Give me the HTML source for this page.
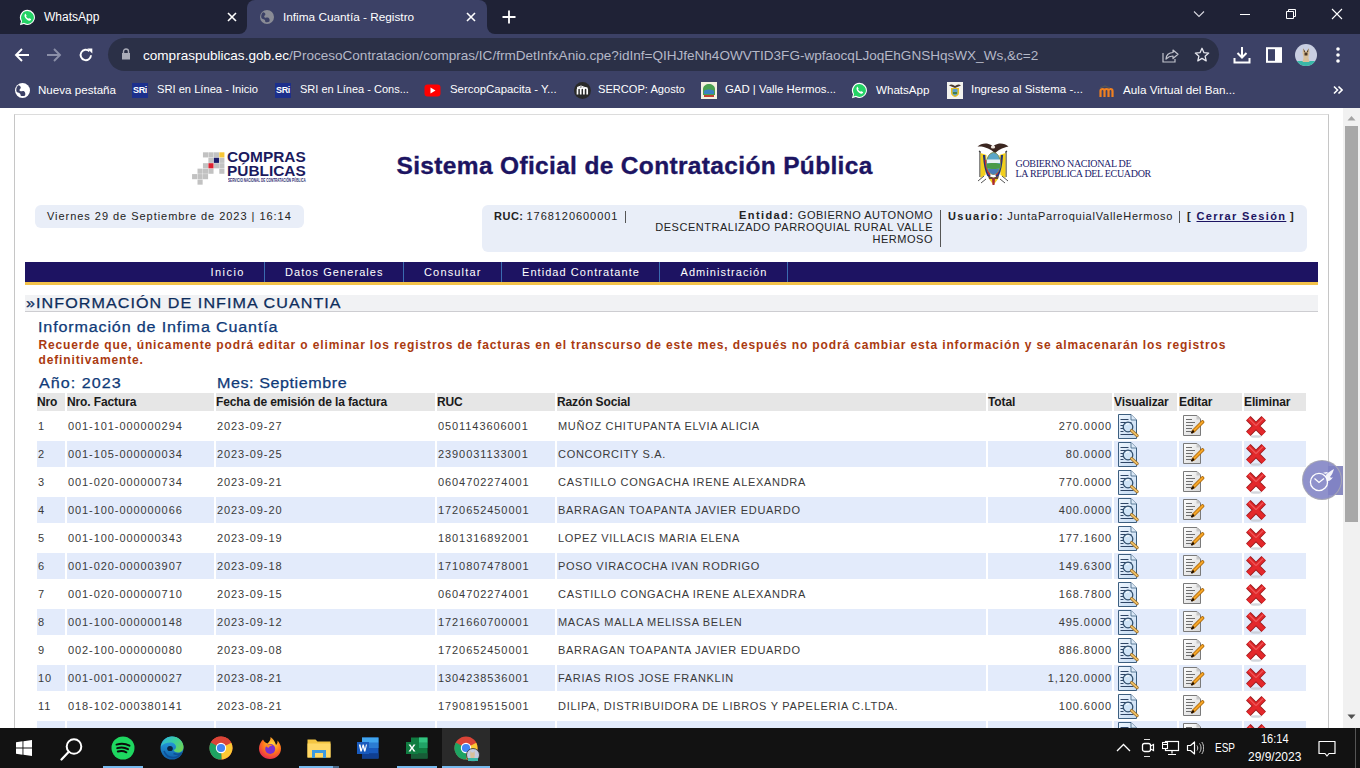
<!DOCTYPE html>
<html><head><meta charset="utf-8">
<style>
*{margin:0;padding:0;box-sizing:border-box}
html,body{width:1360px;height:768px;overflow:hidden;background:#fff;font-family:"Liberation Sans",sans-serif}
.a{position:absolute;white-space:nowrap}
#tabs{position:absolute;left:0;top:0;width:1360px;height:34px;background:#1f2236}
#tool{position:absolute;left:0;top:34px;width:1360px;height:38px;background:#3c4166}
#bm{position:absolute;left:0;top:72px;width:1360px;height:36px;background:#3c4166}
#page{position:absolute;left:0;top:108px;width:1360px;height:620px;background:#fff;overflow:hidden}
#pin{position:absolute;left:0;top:-108px;width:1360px;height:900px}
#task{position:absolute;left:0;top:728px;width:1360px;height:40px;background:#121212}
.ct{color:#fff;font-size:12.5px}
.t11{font-size:11px;color:#222;line-height:14px}
.nv{top:265px;font-size:11px;color:#fff;line-height:14px}
.th{font-size:12px;font-weight:bold;color:#1a1a1a;letter-spacing:-0.12px;line-height:14px}
.td{font-size:11px;color:#3a3a3a;line-height:14px}
.dg{letter-spacing:0.92px}
.up{letter-spacing:0.7px}
</style></head><body>
<div id="tabs">
  <div class="a" style="left:247px;top:0;width:240px;height:34px;background:#3c4166;border-radius:8px 8px 0 0"></div>
  <div class="a" style="left:239px;top:26px;width:8px;height:8px;background:#3c4166"></div>
  <div class="a" style="left:239px;top:26px;width:8px;height:8px;background:#1f2236;border-radius:0 0 8px 0"></div>
  <div class="a" style="left:487px;top:26px;width:8px;height:8px;background:#3c4166"></div>
  <div class="a" style="left:487px;top:26px;width:8px;height:8px;background:#1f2236;border-radius:0 0 0 8px"></div>
  <!-- whatsapp tab -->
  <svg class="a" style="left:19px;top:9px" width="17" height="17" viewBox="0 0 16 16"><path d="M8 0.8a7.1 7.1 0 0 0-6.1 10.8L0.9 15.2l3.7-1A7.1 7.1 0 1 0 8 0.8z" fill="#fff"/><path d="M8 2a6 6 0 0 0-5.1 9.2l-0.6 2.4 2.4-0.6A6 6 0 1 0 8 2z" fill="#25d366"/><path d="M5.6 4.6c.2-.2.5-.2.7 0l.8 1.4c.1.2 0 .5-.1.6l-.4.4c.4.9 1.2 1.7 2.2 2.2l.4-.4c.2-.2.4-.2.6-.1l1.4.8c.2.1.3.4.1.7-.4.8-1.2 1.1-2 .8-1.9-.7-3.3-2.1-4-4-.3-.8 0-1.6.3-2.4z" fill="#fff"/></svg>
  <div class="a ct" style="left:44px;top:10px;font-size:12px">WhatsApp</div>
  <svg class="a" style="left:227px;top:12px" width="10" height="10" viewBox="0 0 10 10"><path d="M1 1L9 9M9 1L1 9" stroke="#fff" stroke-width="1.6"/></svg>
  <!-- active tab content -->
  <svg class="a" style="left:260px;top:10px" width="14" height="14" viewBox="0 0 14 14"><circle cx="7" cy="7" r="7" fill="#8a8c96"/><path d="M3 2.2c1.5.3 2.6 1.2 2.4 2.3-.2 1-1.3 1.2-1.2 2.2.1.9 1.4 1.1 2.6.9 1.5-.2 2.3.5 2.6 1.4.3.9.4 1.8-.2 2.8-1.2.5-2.6.6-3.8.2-.3-1-.2-2-1.1-2.4-1-.5-2.2-.6-2.9-1.6-.5-1.9-.1-4.1 1.6-5.8z" fill="#3c4166"/></svg>
  <div class="a ct" style="left:283px;top:10px;font-size:11.8px">Infima Cuantía - Registro</div>
  <svg class="a" style="left:466px;top:12px" width="10" height="10" viewBox="0 0 10 10"><path d="M1 1L9 9M9 1L1 9" stroke="#fff" stroke-width="1.6"/></svg>
  <svg class="a" style="left:502px;top:10px" width="14" height="14" viewBox="0 0 14 14"><path d="M7 0.5V13.5M0.5 7H13.5" stroke="#fff" stroke-width="1.8"/></svg>
  <!-- window controls -->
  <svg class="a" style="left:1193px;top:10px" width="12" height="8" viewBox="0 0 12 8"><path d="M1 1.5L6 6.5L11 1.5" stroke="#d8d8e0" stroke-width="1.1" fill="none"/></svg>
  <div class="a" style="left:1240px;top:14px;width:10px;height:1px;background:#fff"></div>
  <svg class="a" style="left:1285px;top:8px" width="12" height="12" viewBox="0 0 12 12"><path d="M1.5 3.5h7v7h-7z M3.5 3.5V1.5h7v7h-2" stroke="#fff" stroke-width="1" fill="none"/></svg>
  <svg class="a" style="left:1331px;top:8px" width="12" height="12" viewBox="0 0 12 12"><path d="M1 1L11 11M11 1L1 11" stroke="#fff" stroke-width="1.1"/></svg>
</div>
<div id="tool">
  <!-- back fwd reload -->
  <svg class="a" style="left:14px;top:13px" width="16" height="16" viewBox="0 0 16 16"><path d="M15 8H2.5M8 2L2 8l6 6" stroke="#fff" stroke-width="1.9" fill="none"/></svg>
  <svg class="a" style="left:46px;top:13px" width="16" height="16" viewBox="0 0 16 16"><path d="M1 8h12.5M8 2l6 6-6 6" stroke="#8b8fa8" stroke-width="1.9" fill="none"/></svg>
  <svg class="a" style="left:78px;top:13px" width="16" height="16" viewBox="0 0 16 16"><path d="M13 8.2A5.2 5.2 0 1 1 11.4 4.2" stroke="#fff" stroke-width="1.9" fill="none"/><path d="M9.3 1.5h5v5z" fill="#fff"/></svg>
  <div class="a" style="left:108px;top:4px;width:1111px;height:33px;background:#2b3047;border-radius:17px"></div>
  <svg class="a" style="left:121px;top:14px" width="10" height="12" viewBox="0 0 10 12"><path d="M2.5 5V3.5a2.5 2.5 0 0 1 5 0V5" stroke="#a9abb7" stroke-width="1.4" fill="none"/><rect x="1" y="5" width="8" height="6.5" fill="#a9abb7"/></svg>
  <div class="a" style="left:143px;top:14px;font-size:13.55px;color:#b5b8c8">
    <span style="color:#fff">compraspublicas.gob.ec</span>/ProcesoContratacion/compras/IC/frmDetInfxAnio.cpe?idInf=QIHJfeNh4OWVTID3FG-wpfaocqLJoqEhGNSHqsWX_Ws,&amp;c=2</div>
  <!-- share & star -->
  <svg class="a" style="left:1162px;top:13px" width="17" height="16" viewBox="0 0 17 16"><path d="M1 6v9h12v-3" stroke="#c0c2cc" stroke-width="1.2" fill="none"/><path d="M4 12c0-4 3-6.5 7-6.5V3l5 4.3-5 4.2V9c-3 0-5 1-7 3z" stroke="#c0c2cc" stroke-width="1.2" fill="none" stroke-linejoin="round"/></svg>
  <svg class="a" style="left:1194px;top:13px" width="16" height="16" viewBox="0 0 16 16"><path d="M8 1.3l2 4.4 4.7.4-3.6 3.1 1.1 4.7L8 11.4l-4.2 2.5 1.1-4.7L1.3 6.1 6 5.7z" stroke="#e6e7ee" stroke-width="1.3" fill="none" stroke-linejoin="round"/></svg>
  <!-- download, sidebar, avatar, menu -->
  <svg class="a" style="left:1233px;top:12px" width="18" height="18" viewBox="0 0 18 18"><path d="M9 1v10M4.5 7l4.5 4.5L13.5 7" stroke="#fff" stroke-width="2" fill="none"/><path d="M1.5 12v4.5h15V12" stroke="#fff" stroke-width="2" fill="none"/></svg>
  <svg class="a" style="left:1266px;top:13px" width="16" height="16" viewBox="0 0 16 16"><rect x="1" y="1.2" width="14" height="13.6" fill="none" stroke="#fff" stroke-width="2"/><rect x="9" y="1" width="6" height="14" fill="#fff"/></svg>
  <svg class="a" style="left:1295px;top:10px" width="22" height="22" viewBox="0 0 22 22"><defs><clipPath id="av"><circle cx="11" cy="11" r="11"/></clipPath></defs><g clip-path="url(#av)"><rect width="22" height="22" fill="#c9cfe2"/><rect y="17" width="22" height="5" fill="#3ab8a8"/><path d="M8 4l2 3h2l2-3 .5 5c-.5 2-1 3-1 5l1 4h-7l1-4c0-2-.5-3-1-5z" fill="#d8c09a"/><path d="M8.5 4.5l1.5 3-1 1zM13.5 4.5l-1.5 3 1 1z" fill="#3a2a20"/><rect x="9.5" y="8.5" width="3" height="3" fill="#4a3626"/></g></svg>
  <svg class="a" style="left:1335px;top:12px" width="6" height="18" viewBox="0 0 6 18"><circle cx="3" cy="3" r="1.8" fill="#fff"/><circle cx="3" cy="9" r="1.8" fill="#fff"/><circle cx="3" cy="15" r="1.8" fill="#fff"/></svg>
</div>
<div id="bm">
  <svg class="a" style="left:15px;top:11px" width="15" height="15" viewBox="0 0 14 14"><circle cx="7" cy="7" r="7" fill="#fff"/><path d="M3 2.2c1.5.3 2.6 1.2 2.4 2.3-.2 1-1.3 1.2-1.2 2.2.1.9 1.4 1.1 2.6.9 1.5-.2 2.3.5 2.6 1.4.3.9.4 1.8-.2 2.8-1.2.5-2.6.6-3.8.2-.3-1-.2-2-1.1-2.4-1-.5-2.2-.6-2.9-1.6-.5-1.9-.1-4.1 1.6-5.8z" fill="#3c4166"/></svg>
  <div class="a ct" style="left:38px;top:11px;font-size:11.6px">Nueva pestaña</div>
  <div class="a" style="left:132px;top:11px;width:16px;height:15px;background:#1c2f8c;color:#fff;font:bold 9px 'Liberation Sans';line-height:15px;text-align:center;letter-spacing:-0.3px">SRi</div>
  <div class="a ct" style="left:157px;top:11px;font-size:11.15px">SRI en Línea - Inicio</div>
  <div class="a" style="left:275px;top:11px;width:16px;height:15px;background:#1c2f8c;color:#fff;font:bold 9px 'Liberation Sans';line-height:15px;text-align:center;letter-spacing:-0.3px">SRi</div>
  <div class="a ct" style="left:300px;top:11px;font-size:11.0px">SRI en Línea - Cons...</div>
  <svg class="a" style="left:424px;top:12px" width="17" height="13" viewBox="0 0 17 13"><rect x="0.5" y="0.5" width="16" height="12" rx="3" fill="#f00"/><path d="M6.5 3.5v6l5-3z" fill="#fff"/></svg>
  <div class="a ct" style="left:450px;top:11px;font-size:11.4px">SercopCapacita - Y...</div>
  <svg class="a" style="left:574px;top:10px" width="17" height="17" viewBox="0 0 17 17"><circle cx="8.5" cy="8.5" r="8.5" fill="#2a2a2a"/><path d="M3.5 12.5V7.5c0-1 .8-1.6 1.6-1.6s1.6.6 1.6 1.6v5M6.7 7.5c0-1 .8-1.6 1.6-1.6s1.6.6 1.6 1.6v5M10 7.5c0-1 .8-1.6 1.6-1.6s1.6.6 1.6 1.6v5" stroke="#fff" stroke-width="1.7" fill="none"/><path d="M3 5.5l4-1.5 4 1.5" stroke="#fff" stroke-width="1" fill="none"/></svg>
  <div class="a ct" style="left:598px;top:11px;font-size:11.1px">SERCOP: Agosto</div>
  <svg class="a" style="left:701px;top:10px" width="16" height="17" viewBox="0 0 16 17"><rect width="16" height="17" fill="#f4f0e0"/><path d="M2 13V7c0-3 3-5 6-5s6 2 6 5v6z" fill="#4aa050"/><path d="M3 9c2-2 8-2 10 0v3H3z" fill="#3a80c0"/><rect x="3" y="13" width="10" height="2" fill="#c04030"/></svg>
  <div class="a ct" style="left:725px;top:11px;font-size:11.4px">GAD | Valle Hermos...</div>
  <svg class="a" style="left:851px;top:10px" width="17" height="17" viewBox="0 0 16 16"><path d="M8 0.8a7.1 7.1 0 0 0-6.1 10.8L0.9 15.2l3.7-1A7.1 7.1 0 1 0 8 0.8z" fill="#fff"/><path d="M8 2a6 6 0 0 0-5.1 9.2l-0.6 2.4 2.4-0.6A6 6 0 1 0 8 2z" fill="#25d366"/><path d="M5.6 4.6c.2-.2.5-.2.7 0l.8 1.4c.1.2 0 .5-.1.6l-.4.4c.4.9 1.2 1.7 2.2 2.2l.4-.4c.2-.2.4-.2.6-.1l1.4.8c.2.1.3.4.1.7-.4.8-1.2 1.1-2 .8-1.9-.7-3.3-2.1-4-4-.3-.8 0-1.6.3-2.4z" fill="#fff"/></svg>
  <div class="a ct" style="left:876px;top:11px;font-size:11.6px">WhatsApp</div>
  <svg class="a" style="left:947px;top:10px" width="16" height="17" viewBox="0 0 16 17"><rect width="16" height="17" fill="#f2f2ee"/><path d="M2 3.5c2-1.5 4-1 6 .5 2-1.5 4-2 6-.5L8 6z" fill="#4a3a30"/><path d="M4 6h8v5c0 2-2 3.5-4 4-2-.5-4-2-4-4z" fill="#e8c020"/><path d="M5.5 7h5v4c0 1.3-1.2 2.3-2.5 2.8-1.3-.5-2.5-1.5-2.5-2.8z" fill="#5aa0d0"/><rect x="6" y="10" width="4" height="2" fill="#4a8040"/></svg>
  <div class="a ct" style="left:971px;top:11px;font-size:11.5px">Ingreso al Sistema -...</div>
  <svg class="a" style="left:1099px;top:11px" width="17" height="15" viewBox="0 0 17 15"><path d="M1.5 14V8c0-1.3 1-2 2-2s2 .7 2 2v6M5.5 8c0-1.3 1-2 2-2s2 .7 2 2v6M9.5 8c0-1.3 1-2 2-2s2 .7 2 2v6" stroke="#f08020" stroke-width="2.2" fill="none"/><path d="M1 5l5-2 5 2" stroke="#555" stroke-width="1.2" fill="none"/></svg>
  <div class="a ct" style="left:1123px;top:11px;font-size:11.7px">Aula Virtual del Ban...</div>
  <svg class="a" style="left:1333px;top:84px;display:none" width="10" height="10"></svg>
  <svg class="a" style="left:1333px;top:13px" width="10" height="10" viewBox="0 0 10 10"><path d="M1 1.5l3.5 3.5L1 8.5M5.5 1.5L9 5l-3.5 3.5" stroke="#fff" stroke-width="1.6" fill="none"/></svg>
</div>
<div id="page"><div id="pin"><div class="a" style="left:14px;top:114px;width:1315px;height:700px;border:1px solid #c6c6c6;border-top-color:#dcdcdc;background:#fff"></div>
<!-- compras publicas logo -->
<svg class="a" style="left:192px;top:152px" width="33" height="38" viewBox="0 0 32 37">
 <g fill="#c2c2c2">
  <rect x="10.6" y="0.3" width="5" height="5"/><rect x="15.9" y="0.3" width="5" height="5"/><rect x="21.2" y="0.3" width="5" height="5"/>
  <rect x="15.9" y="5.6" width="5" height="5"/><rect x="26.5" y="5.6" width="5" height="5"/>
  <rect x="10.6" y="10.9" width="5" height="5"/><rect x="21.2" y="10.9" width="5" height="5"/><rect x="26.5" y="10.9" width="5" height="5"/>
  <rect x="5.3" y="16.2" width="5" height="5"/><rect x="10.6" y="16.2" width="5" height="5"/><rect x="15.9" y="16.2" width="5" height="5"/><rect x="26.5" y="16.2" width="5" height="5"/>
  <rect x="0" y="21.5" width="5" height="5"/><rect x="5.3" y="21.5" width="5" height="5"/><rect x="10.6" y="21.5" width="5" height="5"/>
  <rect x="5.3" y="26.8" width="5" height="5"/>
 </g>
 <rect x="26.5" y="0.3" width="5" height="5" fill="#f7c637"/>
 <rect x="21.2" y="5.6" width="5" height="5" fill="#1d1d6b"/>
 <rect x="15.9" y="10.9" width="5" height="5" fill="#dd2130"/>
</svg>
<div class="a" style="left:226.5px;top:150px;font:bold 14px 'Liberation Sans';color:#1b1a5e;line-height:14px;transform:scaleX(1.1);transform-origin:0 0">COMPRAS</div>
<div class="a" style="left:226.5px;top:164px;font:bold 14px 'Liberation Sans';color:#1b1a5e;line-height:14px;transform:scaleX(1.1);transform-origin:0 0">PÚBLICAS</div>
<div class="a" style="left:228px;top:177.5px;font:bold 4.6px 'Liberation Sans';color:#2a2a70;line-height:5px;transform:scaleX(0.68);transform-origin:0 0">SERVICIO NACIONAL DE CONTRATACIÓN PÚBLICA</div>
<!-- title -->
<div class="a" style="left:396.5px;top:152px;font:bold 24.5px 'Liberation Sans';color:#1c1462;-webkit-text-stroke:0.35px #1c1462;letter-spacing:0.34px;line-height:28px">Sistema Oficial de Contratación Pública</div>
<!-- ecuador logo -->
<svg class="a" style="left:970px;top:138px" width="48" height="52" viewBox="0 0 48 52">
 <path d="M7.5 8.5c3-2.5 7-3.5 11-2.5 2 .5 3.5 1.5 4.5 2.5 1-1 2.5-2 4.5-2.5 4-1 8 0 11 2.5-3 .5-6 1.5-8.5 3-2 1.2-3.5 2.2-5 3.8-1.5-1.6-3-2.6-5-3.8-2.5-1.5-5.5-2.5-8.5-3z" fill="#3b2620"/>
 <ellipse cx="23" cy="9" rx="2.2" ry="1.6" fill="#f0e8e0"/>
 <path d="M9 13l1.5 1M37 13l-1.5 1" stroke="#333" stroke-width="1.2"/>
 <path d="M10 14v25M36 14v25" stroke="#3a3a3a" stroke-width="1.2"/>
 <path d="M10.5 15c2 1 4 1 6 2l-1 20c-2 1-3.5 2-5 3z" fill="#f2cf1c"/>
 <path d="M35.5 15c-2 1-4 1-6 2l1 20c2 1 3.5 2 5 3z" fill="#f2cf1c"/>
 <path d="M14 17c.5 7 1 14 4 20l2 1.5" stroke="#22347a" stroke-width="2.2" fill="none"/>
 <path d="M32 17c-.5 7-1 14-4 20l-2 1.5" stroke="#22347a" stroke-width="2.2" fill="none"/>
 <path d="M15.5 22c.5 6 1.5 11 4.5 15" stroke="#c42a3a" stroke-width="1.8" fill="none"/>
 <path d="M30.5 22c-.5 6-1.5 11-4.5 15" stroke="#c42a3a" stroke-width="1.8" fill="none"/>
 <ellipse cx="23.5" cy="25.5" rx="7" ry="11" fill="#5aa6c8" stroke="#7a8a50" stroke-width="1"/>
 <path d="M17 21.5h13v3.5H17z" fill="#e8f0f4"/>
 <path d="M16.8 26c3-1.5 10-1.5 13.5 0v4c-3 1.5-10 1.5-13.5 0z" fill="#4a9a48"/>
 <path d="M18 31h11c-1 3-3 5-5.5 5.5-2.5-.5-4.5-2.5-5.5-5.5z" fill="#4a7ab8"/>
 <path d="M18 38l5.5 1.5 5.5-1.5-1 3h-9z" fill="#6a4a30"/>
 <path d="M19 41l4.5 6 4.5-6z" fill="#f2cf1c"/>
 <path d="M22 40.5h3l-.5 6.5h-2z" fill="#a82838"/>
 <path d="M8 43l6-5M38 43l-6-5M11 45l5-4M35 45l-5-4" stroke="#555" stroke-width="1"/>
</svg>
<div class="a" style="left:1015.5px;top:158px;font:10px 'Liberation Serif';color:#22206a;letter-spacing:-0.3px;line-height:11px">GOBIERNO NACIONAL DE</div>
<div class="a" style="left:1015.5px;top:167.5px;font:10px 'Liberation Serif';color:#22206a;letter-spacing:-0.3px;line-height:11px">LA REPUBLICA DEL ECUADOR</div>
<!-- date box -->
<div class="a" style="left:35px;top:205px;width:269px;height:23px;background:#e9eef8;border-radius:6px"></div>
<div class="a t11" style="left:47px;top:209px;letter-spacing:0.96px">Viernes 29 de Septiembre de 2023 | 16:14</div>
<!-- info box -->
<div class="a" style="left:482px;top:205px;width:825px;height:47px;background:#e9eef8;border-radius:6px"></div>
<div class="a t11" style="left:494px;top:208.5px"><b style="letter-spacing:0.5px">RUC:</b> <span style="letter-spacing:0.94px">1768120600001</span></div>
<div class="a" style="left:625px;top:211px;width:1px;height:12px;background:#555"></div>
<div class="a t11" style="right:427px;top:208.5px;text-align:right;line-height:12px;letter-spacing:0.52px"><b style="letter-spacing:1.4px">Entidad:</b> GOBIERNO AUTONOMO<br>DESCENTRALIZADO PARROQUIAL RURAL VALLE<br>HERMOSO</div>
<div class="a" style="left:940px;top:210px;width:1px;height:37px;background:#555"></div>
<div class="a t11" style="left:948px;top:208.5px"><b style="letter-spacing:1.43px">Usuario:</b> <span style="letter-spacing:0.77px">JuntaParroquialValleHermoso</span></div>
<div class="a" style="left:1179px;top:211px;width:1px;height:12px;background:#555"></div>
<div class="a t11" style="left:1187px;top:208.5px;font-weight:bold">[</div>
<div class="a t11" style="left:1196.5px;top:208.5px;font-weight:bold;color:#1c1462;text-decoration:underline;letter-spacing:1.36px">Cerrar Sesión</div>
<div class="a t11" style="left:1290px;top:208.5px;font-weight:bold">]</div>
<!-- nav -->
<div class="a" style="left:25px;top:262px;width:1293px;height:20px;background:#1d1362"></div>
<div class="a" style="left:25px;top:282px;width:1293px;height:3px;background:#f3c24a"></div>
<div class="a" style="left:264px;top:262px;width:1px;height:20px;background:#3a6bb0"></div>
<div class="a" style="left:403px;top:262px;width:1px;height:20px;background:#3a6bb0"></div>
<div class="a" style="left:501px;top:262px;width:1px;height:20px;background:#3a6bb0"></div>
<div class="a" style="left:659px;top:262px;width:1px;height:20px;background:#3a6bb0"></div>
<div class="a" style="left:787px;top:262px;width:1px;height:20px;background:#3a6bb0"></div>
<div class="a nv" style="left:210.5px;letter-spacing:1.45px">Inicio</div>
<div class="a nv" style="left:285px;letter-spacing:1.07px">Datos Generales</div>
<div class="a nv" style="left:424px;letter-spacing:1.16px">Consultar</div>
<div class="a nv" style="left:522px;letter-spacing:1.06px">Entidad Contratante</div>
<div class="a nv" style="left:680.5px;letter-spacing:1.05px">Administración</div>
<!-- heading -->
<div class="a" style="left:25px;top:295px;width:1293px;height:17px;background:#f1f2f4;border-bottom:1px solid #cdcdd1"></div>
<div class="a" style="left:26px;top:295px;font:14px 'Liberation Sans';color:#0d2d5c;-webkit-text-stroke:0.25px #0d2d5c;letter-spacing:0.93px;line-height:16px;transform:scaleX(1.15);transform-origin:0 0">»INFORMACIÓN DE INFIMA CUANTIA</div>
<div class="a" style="left:38px;top:318.5px;font:14px 'Liberation Sans';color:#0f3a78;-webkit-text-stroke:0.25px #0f3a78;letter-spacing:0.74px;line-height:16px;transform:scaleX(1.15);transform-origin:0 0">Información de Infima Cuantía</div>
<div class="a" style="left:38.5px;top:338px;font:bold 12px 'Liberation Sans';color:#aa3a10;letter-spacing:0.87px;line-height:15px;white-space:normal;width:1240px">Recuerde que, únicamente podrá editar o eliminar los registros de facturas en el transcurso de este mes, después no podrá cambiar esta información y se almacenarán los registros definitivamente.</div>
<div class="a" style="left:38.5px;top:374.5px;font:14px 'Liberation Sans';color:#0f3a78;-webkit-text-stroke:0.25px #0f3a78;letter-spacing:0.9px;line-height:16px;transform:scaleX(1.15);transform-origin:0 0">Año: 2023</div>
<div class="a" style="left:217px;top:374.5px;font:14px 'Liberation Sans';color:#0f3a78;-webkit-text-stroke:0.25px #0f3a78;letter-spacing:0.49px;line-height:16px;transform:scaleX(1.15);transform-origin:0 0">Mes: Septiembre</div>
<svg width="0" height="0" style="position:absolute"><defs><linearGradient id="vg" x1="0" y1="0" x2="1" y2="1"><stop offset="0" stop-color="#eef6fe"/><stop offset="1" stop-color="#c4daf2"/></linearGradient><linearGradient id="eg" x1="0" y1="0" x2="1" y2="1"><stop offset="0" stop-color="#ffffff"/><stop offset="1" stop-color="#d6d6d6"/></linearGradient></defs></svg>
<div class="a" style="left:37px;top:393px;width:28px;height:18px;background:#e6e6e6"></div>
<div class="a th" style="left:37px;top:395px">Nro</div>
<div class="a" style="left:67px;top:393px;width:147px;height:18px;background:#e6e6e6"></div>
<div class="a th" style="left:67px;top:395px">Nro. Factura</div>
<div class="a" style="left:216px;top:393px;width:219px;height:18px;background:#e6e6e6"></div>
<div class="a th" style="left:216px;top:395px">Fecha de emisión de la factura</div>
<div class="a" style="left:437px;top:393px;width:118px;height:18px;background:#e6e6e6"></div>
<div class="a th" style="left:437px;top:395px">RUC</div>
<div class="a" style="left:557px;top:393px;width:429px;height:18px;background:#e6e6e6"></div>
<div class="a th" style="left:557px;top:395px">Razón Social</div>
<div class="a" style="left:988px;top:393px;width:124px;height:18px;background:#e6e6e6"></div>
<div class="a th" style="left:988px;top:395px">Total</div>
<div class="a" style="left:1114px;top:393px;width:63px;height:18px;background:#e6e6e6"></div>
<div class="a th" style="left:1114px;top:395px">Visualizar</div>
<div class="a" style="left:1179px;top:393px;width:63px;height:18px;background:#e6e6e6"></div>
<div class="a th" style="left:1179px;top:395px">Editar</div>
<div class="a" style="left:1244px;top:393px;width:62px;height:18px;background:#e6e6e6"></div>
<div class="a th" style="left:1244px;top:395px">Eliminar</div>
<div class="a td dg" style="left:38px;top:419px">1</div>
<div class="a td dg" style="left:68px;top:419px">001-101-000000294</div>
<div class="a td dg" style="left:217px;top:419px">2023-09-27</div>
<div class="a td dg" style="left:438px;top:419px">0501143606001</div>
<div class="a td up" style="left:558px;top:419px">MUÑOZ CHITUPANTA ELVIA ALICIA</div>
<div class="a td dg" style="right:248px;top:419px;text-align:right">270.0000</div>
<svg class="a" style="left:1118px;top:414px" width="22" height="26" viewBox="0 0 22 26"><path d="M0.5 0.5h12.5l5.5 5.5v18.5h-18z" fill="url(#vg)" stroke="#3d5f80" stroke-width="1"/><path d="M13 0.5v5.5h5.5" fill="#dbe9f7" stroke="#3d5f80" stroke-width="0.8"/><path d="M2.5 5.5h8M2.5 8.5h11M2.5 11.5h3M2.5 14.5h3M2.5 17.5h3M2.5 20.5h13" stroke="#2f4666" stroke-width="1"/><circle cx="10" cy="13" r="4.8" fill="#cfe4f7" stroke="#33506e" stroke-width="1.3"/><path d="M8 11a2.5 2.5 0 0 1 3-1" stroke="#fff" stroke-width="1" fill="none"/><path d="M13.6 16.6l5.5 5" stroke="#9a6a20" stroke-width="3.2" stroke-linecap="round"/><path d="M13.6 16.6l5.5 5" stroke="#f2c46a" stroke-width="1.6" stroke-linecap="round"/></svg>
<svg class="a" style="left:1183px;top:415px" width="22" height="22" viewBox="0 0 22 22"><path d="M0.5 0.5h13.5l3.5 3.5v16.5h-17z" fill="url(#eg)" stroke="#7a7a7a" stroke-width="1"/><path d="M13.5 0.5l4 4h-4z" fill="#c8c8c8"/><path d="M3 4.5h6M3 7.5h9M3 10.5h7M3 13.5h6M3 16.5h5" stroke="#6e6e6e" stroke-width="1"/><path d="M19.5 7l-9 9" stroke="#a45f00" stroke-width="3.6" stroke-linecap="round"/><path d="M19.5 7l-9 9" stroke="#f6a628" stroke-width="2.2" stroke-linecap="round"/><path d="M10.2 16.3l-1.2 1.2" stroke="#221100" stroke-width="2.2" stroke-linecap="round"/></svg>
<svg class="a" style="left:1244px;top:414px" width="24" height="25" viewBox="0 0 24 25"><ellipse cx="12" cy="22.5" rx="5.5" ry="1.3" fill="#c4c8d0" opacity=".75"/><path d="M4.3 4.3L19.7 19.7M19.7 4.3L4.3 19.7" stroke="#9c1a1c" stroke-width="6.4"/><path d="M4.3 4.3L19.7 19.7M19.7 4.3L4.3 19.7" stroke="#e3282b" stroke-width="4.6"/><path d="M5 4.6L12 11.6M19 4.6L12 11.6" stroke="#f27070" stroke-width="1.2" opacity=".7"/></svg>
<div class="a" style="left:37px;top:441px;width:28px;height:26px;background:#e3ebfb"></div>
<div class="a" style="left:67px;top:441px;width:147px;height:26px;background:#e3ebfb"></div>
<div class="a" style="left:216px;top:441px;width:219px;height:26px;background:#e3ebfb"></div>
<div class="a" style="left:437px;top:441px;width:118px;height:26px;background:#e3ebfb"></div>
<div class="a" style="left:557px;top:441px;width:429px;height:26px;background:#e3ebfb"></div>
<div class="a" style="left:988px;top:441px;width:124px;height:26px;background:#e3ebfb"></div>
<div class="a" style="left:1114px;top:441px;width:63px;height:26px;background:#e3ebfb"></div>
<div class="a" style="left:1179px;top:441px;width:63px;height:26px;background:#e3ebfb"></div>
<div class="a" style="left:1244px;top:441px;width:62px;height:26px;background:#e3ebfb"></div>
<div class="a td dg" style="left:38px;top:447px">2</div>
<div class="a td dg" style="left:68px;top:447px">001-105-000000034</div>
<div class="a td dg" style="left:217px;top:447px">2023-09-25</div>
<div class="a td dg" style="left:438px;top:447px">2390031133001</div>
<div class="a td up" style="left:558px;top:447px">CONCORCITY S.A.</div>
<div class="a td dg" style="right:248px;top:447px;text-align:right">80.0000</div>
<svg class="a" style="left:1118px;top:442px" width="22" height="26" viewBox="0 0 22 26"><path d="M0.5 0.5h12.5l5.5 5.5v18.5h-18z" fill="url(#vg)" stroke="#3d5f80" stroke-width="1"/><path d="M13 0.5v5.5h5.5" fill="#dbe9f7" stroke="#3d5f80" stroke-width="0.8"/><path d="M2.5 5.5h8M2.5 8.5h11M2.5 11.5h3M2.5 14.5h3M2.5 17.5h3M2.5 20.5h13" stroke="#2f4666" stroke-width="1"/><circle cx="10" cy="13" r="4.8" fill="#cfe4f7" stroke="#33506e" stroke-width="1.3"/><path d="M8 11a2.5 2.5 0 0 1 3-1" stroke="#fff" stroke-width="1" fill="none"/><path d="M13.6 16.6l5.5 5" stroke="#9a6a20" stroke-width="3.2" stroke-linecap="round"/><path d="M13.6 16.6l5.5 5" stroke="#f2c46a" stroke-width="1.6" stroke-linecap="round"/></svg>
<svg class="a" style="left:1183px;top:443px" width="22" height="22" viewBox="0 0 22 22"><path d="M0.5 0.5h13.5l3.5 3.5v16.5h-17z" fill="url(#eg)" stroke="#7a7a7a" stroke-width="1"/><path d="M13.5 0.5l4 4h-4z" fill="#c8c8c8"/><path d="M3 4.5h6M3 7.5h9M3 10.5h7M3 13.5h6M3 16.5h5" stroke="#6e6e6e" stroke-width="1"/><path d="M19.5 7l-9 9" stroke="#a45f00" stroke-width="3.6" stroke-linecap="round"/><path d="M19.5 7l-9 9" stroke="#f6a628" stroke-width="2.2" stroke-linecap="round"/><path d="M10.2 16.3l-1.2 1.2" stroke="#221100" stroke-width="2.2" stroke-linecap="round"/></svg>
<svg class="a" style="left:1244px;top:442px" width="24" height="25" viewBox="0 0 24 25"><ellipse cx="12" cy="22.5" rx="5.5" ry="1.3" fill="#c4c8d0" opacity=".75"/><path d="M4.3 4.3L19.7 19.7M19.7 4.3L4.3 19.7" stroke="#9c1a1c" stroke-width="6.4"/><path d="M4.3 4.3L19.7 19.7M19.7 4.3L4.3 19.7" stroke="#e3282b" stroke-width="4.6"/><path d="M5 4.6L12 11.6M19 4.6L12 11.6" stroke="#f27070" stroke-width="1.2" opacity=".7"/></svg>
<div class="a td dg" style="left:38px;top:475px">3</div>
<div class="a td dg" style="left:68px;top:475px">001-020-000000734</div>
<div class="a td dg" style="left:217px;top:475px">2023-09-21</div>
<div class="a td dg" style="left:438px;top:475px">0604702274001</div>
<div class="a td up" style="left:558px;top:475px">CASTILLO CONGACHA IRENE ALEXANDRA</div>
<div class="a td dg" style="right:248px;top:475px;text-align:right">770.0000</div>
<svg class="a" style="left:1118px;top:470px" width="22" height="26" viewBox="0 0 22 26"><path d="M0.5 0.5h12.5l5.5 5.5v18.5h-18z" fill="url(#vg)" stroke="#3d5f80" stroke-width="1"/><path d="M13 0.5v5.5h5.5" fill="#dbe9f7" stroke="#3d5f80" stroke-width="0.8"/><path d="M2.5 5.5h8M2.5 8.5h11M2.5 11.5h3M2.5 14.5h3M2.5 17.5h3M2.5 20.5h13" stroke="#2f4666" stroke-width="1"/><circle cx="10" cy="13" r="4.8" fill="#cfe4f7" stroke="#33506e" stroke-width="1.3"/><path d="M8 11a2.5 2.5 0 0 1 3-1" stroke="#fff" stroke-width="1" fill="none"/><path d="M13.6 16.6l5.5 5" stroke="#9a6a20" stroke-width="3.2" stroke-linecap="round"/><path d="M13.6 16.6l5.5 5" stroke="#f2c46a" stroke-width="1.6" stroke-linecap="round"/></svg>
<svg class="a" style="left:1183px;top:471px" width="22" height="22" viewBox="0 0 22 22"><path d="M0.5 0.5h13.5l3.5 3.5v16.5h-17z" fill="url(#eg)" stroke="#7a7a7a" stroke-width="1"/><path d="M13.5 0.5l4 4h-4z" fill="#c8c8c8"/><path d="M3 4.5h6M3 7.5h9M3 10.5h7M3 13.5h6M3 16.5h5" stroke="#6e6e6e" stroke-width="1"/><path d="M19.5 7l-9 9" stroke="#a45f00" stroke-width="3.6" stroke-linecap="round"/><path d="M19.5 7l-9 9" stroke="#f6a628" stroke-width="2.2" stroke-linecap="round"/><path d="M10.2 16.3l-1.2 1.2" stroke="#221100" stroke-width="2.2" stroke-linecap="round"/></svg>
<svg class="a" style="left:1244px;top:470px" width="24" height="25" viewBox="0 0 24 25"><ellipse cx="12" cy="22.5" rx="5.5" ry="1.3" fill="#c4c8d0" opacity=".75"/><path d="M4.3 4.3L19.7 19.7M19.7 4.3L4.3 19.7" stroke="#9c1a1c" stroke-width="6.4"/><path d="M4.3 4.3L19.7 19.7M19.7 4.3L4.3 19.7" stroke="#e3282b" stroke-width="4.6"/><path d="M5 4.6L12 11.6M19 4.6L12 11.6" stroke="#f27070" stroke-width="1.2" opacity=".7"/></svg>
<div class="a" style="left:37px;top:497px;width:28px;height:26px;background:#e3ebfb"></div>
<div class="a" style="left:67px;top:497px;width:147px;height:26px;background:#e3ebfb"></div>
<div class="a" style="left:216px;top:497px;width:219px;height:26px;background:#e3ebfb"></div>
<div class="a" style="left:437px;top:497px;width:118px;height:26px;background:#e3ebfb"></div>
<div class="a" style="left:557px;top:497px;width:429px;height:26px;background:#e3ebfb"></div>
<div class="a" style="left:988px;top:497px;width:124px;height:26px;background:#e3ebfb"></div>
<div class="a" style="left:1114px;top:497px;width:63px;height:26px;background:#e3ebfb"></div>
<div class="a" style="left:1179px;top:497px;width:63px;height:26px;background:#e3ebfb"></div>
<div class="a" style="left:1244px;top:497px;width:62px;height:26px;background:#e3ebfb"></div>
<div class="a td dg" style="left:38px;top:503px">4</div>
<div class="a td dg" style="left:68px;top:503px">001-100-000000066</div>
<div class="a td dg" style="left:217px;top:503px">2023-09-20</div>
<div class="a td dg" style="left:438px;top:503px">1720652450001</div>
<div class="a td up" style="left:558px;top:503px">BARRAGAN TOAPANTA JAVIER EDUARDO</div>
<div class="a td dg" style="right:248px;top:503px;text-align:right">400.0000</div>
<svg class="a" style="left:1118px;top:498px" width="22" height="26" viewBox="0 0 22 26"><path d="M0.5 0.5h12.5l5.5 5.5v18.5h-18z" fill="url(#vg)" stroke="#3d5f80" stroke-width="1"/><path d="M13 0.5v5.5h5.5" fill="#dbe9f7" stroke="#3d5f80" stroke-width="0.8"/><path d="M2.5 5.5h8M2.5 8.5h11M2.5 11.5h3M2.5 14.5h3M2.5 17.5h3M2.5 20.5h13" stroke="#2f4666" stroke-width="1"/><circle cx="10" cy="13" r="4.8" fill="#cfe4f7" stroke="#33506e" stroke-width="1.3"/><path d="M8 11a2.5 2.5 0 0 1 3-1" stroke="#fff" stroke-width="1" fill="none"/><path d="M13.6 16.6l5.5 5" stroke="#9a6a20" stroke-width="3.2" stroke-linecap="round"/><path d="M13.6 16.6l5.5 5" stroke="#f2c46a" stroke-width="1.6" stroke-linecap="round"/></svg>
<svg class="a" style="left:1183px;top:499px" width="22" height="22" viewBox="0 0 22 22"><path d="M0.5 0.5h13.5l3.5 3.5v16.5h-17z" fill="url(#eg)" stroke="#7a7a7a" stroke-width="1"/><path d="M13.5 0.5l4 4h-4z" fill="#c8c8c8"/><path d="M3 4.5h6M3 7.5h9M3 10.5h7M3 13.5h6M3 16.5h5" stroke="#6e6e6e" stroke-width="1"/><path d="M19.5 7l-9 9" stroke="#a45f00" stroke-width="3.6" stroke-linecap="round"/><path d="M19.5 7l-9 9" stroke="#f6a628" stroke-width="2.2" stroke-linecap="round"/><path d="M10.2 16.3l-1.2 1.2" stroke="#221100" stroke-width="2.2" stroke-linecap="round"/></svg>
<svg class="a" style="left:1244px;top:498px" width="24" height="25" viewBox="0 0 24 25"><ellipse cx="12" cy="22.5" rx="5.5" ry="1.3" fill="#c4c8d0" opacity=".75"/><path d="M4.3 4.3L19.7 19.7M19.7 4.3L4.3 19.7" stroke="#9c1a1c" stroke-width="6.4"/><path d="M4.3 4.3L19.7 19.7M19.7 4.3L4.3 19.7" stroke="#e3282b" stroke-width="4.6"/><path d="M5 4.6L12 11.6M19 4.6L12 11.6" stroke="#f27070" stroke-width="1.2" opacity=".7"/></svg>
<div class="a td dg" style="left:38px;top:531px">5</div>
<div class="a td dg" style="left:68px;top:531px">001-100-000000343</div>
<div class="a td dg" style="left:217px;top:531px">2023-09-19</div>
<div class="a td dg" style="left:438px;top:531px">1801316892001</div>
<div class="a td up" style="left:558px;top:531px">LOPEZ VILLACIS MARIA ELENA</div>
<div class="a td dg" style="right:248px;top:531px;text-align:right">177.1600</div>
<svg class="a" style="left:1118px;top:526px" width="22" height="26" viewBox="0 0 22 26"><path d="M0.5 0.5h12.5l5.5 5.5v18.5h-18z" fill="url(#vg)" stroke="#3d5f80" stroke-width="1"/><path d="M13 0.5v5.5h5.5" fill="#dbe9f7" stroke="#3d5f80" stroke-width="0.8"/><path d="M2.5 5.5h8M2.5 8.5h11M2.5 11.5h3M2.5 14.5h3M2.5 17.5h3M2.5 20.5h13" stroke="#2f4666" stroke-width="1"/><circle cx="10" cy="13" r="4.8" fill="#cfe4f7" stroke="#33506e" stroke-width="1.3"/><path d="M8 11a2.5 2.5 0 0 1 3-1" stroke="#fff" stroke-width="1" fill="none"/><path d="M13.6 16.6l5.5 5" stroke="#9a6a20" stroke-width="3.2" stroke-linecap="round"/><path d="M13.6 16.6l5.5 5" stroke="#f2c46a" stroke-width="1.6" stroke-linecap="round"/></svg>
<svg class="a" style="left:1183px;top:527px" width="22" height="22" viewBox="0 0 22 22"><path d="M0.5 0.5h13.5l3.5 3.5v16.5h-17z" fill="url(#eg)" stroke="#7a7a7a" stroke-width="1"/><path d="M13.5 0.5l4 4h-4z" fill="#c8c8c8"/><path d="M3 4.5h6M3 7.5h9M3 10.5h7M3 13.5h6M3 16.5h5" stroke="#6e6e6e" stroke-width="1"/><path d="M19.5 7l-9 9" stroke="#a45f00" stroke-width="3.6" stroke-linecap="round"/><path d="M19.5 7l-9 9" stroke="#f6a628" stroke-width="2.2" stroke-linecap="round"/><path d="M10.2 16.3l-1.2 1.2" stroke="#221100" stroke-width="2.2" stroke-linecap="round"/></svg>
<svg class="a" style="left:1244px;top:526px" width="24" height="25" viewBox="0 0 24 25"><ellipse cx="12" cy="22.5" rx="5.5" ry="1.3" fill="#c4c8d0" opacity=".75"/><path d="M4.3 4.3L19.7 19.7M19.7 4.3L4.3 19.7" stroke="#9c1a1c" stroke-width="6.4"/><path d="M4.3 4.3L19.7 19.7M19.7 4.3L4.3 19.7" stroke="#e3282b" stroke-width="4.6"/><path d="M5 4.6L12 11.6M19 4.6L12 11.6" stroke="#f27070" stroke-width="1.2" opacity=".7"/></svg>
<div class="a" style="left:37px;top:553px;width:28px;height:26px;background:#e3ebfb"></div>
<div class="a" style="left:67px;top:553px;width:147px;height:26px;background:#e3ebfb"></div>
<div class="a" style="left:216px;top:553px;width:219px;height:26px;background:#e3ebfb"></div>
<div class="a" style="left:437px;top:553px;width:118px;height:26px;background:#e3ebfb"></div>
<div class="a" style="left:557px;top:553px;width:429px;height:26px;background:#e3ebfb"></div>
<div class="a" style="left:988px;top:553px;width:124px;height:26px;background:#e3ebfb"></div>
<div class="a" style="left:1114px;top:553px;width:63px;height:26px;background:#e3ebfb"></div>
<div class="a" style="left:1179px;top:553px;width:63px;height:26px;background:#e3ebfb"></div>
<div class="a" style="left:1244px;top:553px;width:62px;height:26px;background:#e3ebfb"></div>
<div class="a td dg" style="left:38px;top:559px">6</div>
<div class="a td dg" style="left:68px;top:559px">001-020-000003907</div>
<div class="a td dg" style="left:217px;top:559px">2023-09-18</div>
<div class="a td dg" style="left:438px;top:559px">1710807478001</div>
<div class="a td up" style="left:558px;top:559px">POSO VIRACOCHA IVAN RODRIGO</div>
<div class="a td dg" style="right:248px;top:559px;text-align:right">149.6300</div>
<svg class="a" style="left:1118px;top:554px" width="22" height="26" viewBox="0 0 22 26"><path d="M0.5 0.5h12.5l5.5 5.5v18.5h-18z" fill="url(#vg)" stroke="#3d5f80" stroke-width="1"/><path d="M13 0.5v5.5h5.5" fill="#dbe9f7" stroke="#3d5f80" stroke-width="0.8"/><path d="M2.5 5.5h8M2.5 8.5h11M2.5 11.5h3M2.5 14.5h3M2.5 17.5h3M2.5 20.5h13" stroke="#2f4666" stroke-width="1"/><circle cx="10" cy="13" r="4.8" fill="#cfe4f7" stroke="#33506e" stroke-width="1.3"/><path d="M8 11a2.5 2.5 0 0 1 3-1" stroke="#fff" stroke-width="1" fill="none"/><path d="M13.6 16.6l5.5 5" stroke="#9a6a20" stroke-width="3.2" stroke-linecap="round"/><path d="M13.6 16.6l5.5 5" stroke="#f2c46a" stroke-width="1.6" stroke-linecap="round"/></svg>
<svg class="a" style="left:1183px;top:555px" width="22" height="22" viewBox="0 0 22 22"><path d="M0.5 0.5h13.5l3.5 3.5v16.5h-17z" fill="url(#eg)" stroke="#7a7a7a" stroke-width="1"/><path d="M13.5 0.5l4 4h-4z" fill="#c8c8c8"/><path d="M3 4.5h6M3 7.5h9M3 10.5h7M3 13.5h6M3 16.5h5" stroke="#6e6e6e" stroke-width="1"/><path d="M19.5 7l-9 9" stroke="#a45f00" stroke-width="3.6" stroke-linecap="round"/><path d="M19.5 7l-9 9" stroke="#f6a628" stroke-width="2.2" stroke-linecap="round"/><path d="M10.2 16.3l-1.2 1.2" stroke="#221100" stroke-width="2.2" stroke-linecap="round"/></svg>
<svg class="a" style="left:1244px;top:554px" width="24" height="25" viewBox="0 0 24 25"><ellipse cx="12" cy="22.5" rx="5.5" ry="1.3" fill="#c4c8d0" opacity=".75"/><path d="M4.3 4.3L19.7 19.7M19.7 4.3L4.3 19.7" stroke="#9c1a1c" stroke-width="6.4"/><path d="M4.3 4.3L19.7 19.7M19.7 4.3L4.3 19.7" stroke="#e3282b" stroke-width="4.6"/><path d="M5 4.6L12 11.6M19 4.6L12 11.6" stroke="#f27070" stroke-width="1.2" opacity=".7"/></svg>
<div class="a td dg" style="left:38px;top:587px">7</div>
<div class="a td dg" style="left:68px;top:587px">001-020-000000710</div>
<div class="a td dg" style="left:217px;top:587px">2023-09-15</div>
<div class="a td dg" style="left:438px;top:587px">0604702274001</div>
<div class="a td up" style="left:558px;top:587px">CASTILLO CONGACHA IRENE ALEXANDRA</div>
<div class="a td dg" style="right:248px;top:587px;text-align:right">168.7800</div>
<svg class="a" style="left:1118px;top:582px" width="22" height="26" viewBox="0 0 22 26"><path d="M0.5 0.5h12.5l5.5 5.5v18.5h-18z" fill="url(#vg)" stroke="#3d5f80" stroke-width="1"/><path d="M13 0.5v5.5h5.5" fill="#dbe9f7" stroke="#3d5f80" stroke-width="0.8"/><path d="M2.5 5.5h8M2.5 8.5h11M2.5 11.5h3M2.5 14.5h3M2.5 17.5h3M2.5 20.5h13" stroke="#2f4666" stroke-width="1"/><circle cx="10" cy="13" r="4.8" fill="#cfe4f7" stroke="#33506e" stroke-width="1.3"/><path d="M8 11a2.5 2.5 0 0 1 3-1" stroke="#fff" stroke-width="1" fill="none"/><path d="M13.6 16.6l5.5 5" stroke="#9a6a20" stroke-width="3.2" stroke-linecap="round"/><path d="M13.6 16.6l5.5 5" stroke="#f2c46a" stroke-width="1.6" stroke-linecap="round"/></svg>
<svg class="a" style="left:1183px;top:583px" width="22" height="22" viewBox="0 0 22 22"><path d="M0.5 0.5h13.5l3.5 3.5v16.5h-17z" fill="url(#eg)" stroke="#7a7a7a" stroke-width="1"/><path d="M13.5 0.5l4 4h-4z" fill="#c8c8c8"/><path d="M3 4.5h6M3 7.5h9M3 10.5h7M3 13.5h6M3 16.5h5" stroke="#6e6e6e" stroke-width="1"/><path d="M19.5 7l-9 9" stroke="#a45f00" stroke-width="3.6" stroke-linecap="round"/><path d="M19.5 7l-9 9" stroke="#f6a628" stroke-width="2.2" stroke-linecap="round"/><path d="M10.2 16.3l-1.2 1.2" stroke="#221100" stroke-width="2.2" stroke-linecap="round"/></svg>
<svg class="a" style="left:1244px;top:582px" width="24" height="25" viewBox="0 0 24 25"><ellipse cx="12" cy="22.5" rx="5.5" ry="1.3" fill="#c4c8d0" opacity=".75"/><path d="M4.3 4.3L19.7 19.7M19.7 4.3L4.3 19.7" stroke="#9c1a1c" stroke-width="6.4"/><path d="M4.3 4.3L19.7 19.7M19.7 4.3L4.3 19.7" stroke="#e3282b" stroke-width="4.6"/><path d="M5 4.6L12 11.6M19 4.6L12 11.6" stroke="#f27070" stroke-width="1.2" opacity=".7"/></svg>
<div class="a" style="left:37px;top:609px;width:28px;height:26px;background:#e3ebfb"></div>
<div class="a" style="left:67px;top:609px;width:147px;height:26px;background:#e3ebfb"></div>
<div class="a" style="left:216px;top:609px;width:219px;height:26px;background:#e3ebfb"></div>
<div class="a" style="left:437px;top:609px;width:118px;height:26px;background:#e3ebfb"></div>
<div class="a" style="left:557px;top:609px;width:429px;height:26px;background:#e3ebfb"></div>
<div class="a" style="left:988px;top:609px;width:124px;height:26px;background:#e3ebfb"></div>
<div class="a" style="left:1114px;top:609px;width:63px;height:26px;background:#e3ebfb"></div>
<div class="a" style="left:1179px;top:609px;width:63px;height:26px;background:#e3ebfb"></div>
<div class="a" style="left:1244px;top:609px;width:62px;height:26px;background:#e3ebfb"></div>
<div class="a td dg" style="left:38px;top:615px">8</div>
<div class="a td dg" style="left:68px;top:615px">001-100-000000148</div>
<div class="a td dg" style="left:217px;top:615px">2023-09-12</div>
<div class="a td dg" style="left:438px;top:615px">1721660700001</div>
<div class="a td up" style="left:558px;top:615px">MACAS MALLA MELISSA BELEN</div>
<div class="a td dg" style="right:248px;top:615px;text-align:right">495.0000</div>
<svg class="a" style="left:1118px;top:610px" width="22" height="26" viewBox="0 0 22 26"><path d="M0.5 0.5h12.5l5.5 5.5v18.5h-18z" fill="url(#vg)" stroke="#3d5f80" stroke-width="1"/><path d="M13 0.5v5.5h5.5" fill="#dbe9f7" stroke="#3d5f80" stroke-width="0.8"/><path d="M2.5 5.5h8M2.5 8.5h11M2.5 11.5h3M2.5 14.5h3M2.5 17.5h3M2.5 20.5h13" stroke="#2f4666" stroke-width="1"/><circle cx="10" cy="13" r="4.8" fill="#cfe4f7" stroke="#33506e" stroke-width="1.3"/><path d="M8 11a2.5 2.5 0 0 1 3-1" stroke="#fff" stroke-width="1" fill="none"/><path d="M13.6 16.6l5.5 5" stroke="#9a6a20" stroke-width="3.2" stroke-linecap="round"/><path d="M13.6 16.6l5.5 5" stroke="#f2c46a" stroke-width="1.6" stroke-linecap="round"/></svg>
<svg class="a" style="left:1183px;top:611px" width="22" height="22" viewBox="0 0 22 22"><path d="M0.5 0.5h13.5l3.5 3.5v16.5h-17z" fill="url(#eg)" stroke="#7a7a7a" stroke-width="1"/><path d="M13.5 0.5l4 4h-4z" fill="#c8c8c8"/><path d="M3 4.5h6M3 7.5h9M3 10.5h7M3 13.5h6M3 16.5h5" stroke="#6e6e6e" stroke-width="1"/><path d="M19.5 7l-9 9" stroke="#a45f00" stroke-width="3.6" stroke-linecap="round"/><path d="M19.5 7l-9 9" stroke="#f6a628" stroke-width="2.2" stroke-linecap="round"/><path d="M10.2 16.3l-1.2 1.2" stroke="#221100" stroke-width="2.2" stroke-linecap="round"/></svg>
<svg class="a" style="left:1244px;top:610px" width="24" height="25" viewBox="0 0 24 25"><ellipse cx="12" cy="22.5" rx="5.5" ry="1.3" fill="#c4c8d0" opacity=".75"/><path d="M4.3 4.3L19.7 19.7M19.7 4.3L4.3 19.7" stroke="#9c1a1c" stroke-width="6.4"/><path d="M4.3 4.3L19.7 19.7M19.7 4.3L4.3 19.7" stroke="#e3282b" stroke-width="4.6"/><path d="M5 4.6L12 11.6M19 4.6L12 11.6" stroke="#f27070" stroke-width="1.2" opacity=".7"/></svg>
<div class="a td dg" style="left:38px;top:643px">9</div>
<div class="a td dg" style="left:68px;top:643px">002-100-000000080</div>
<div class="a td dg" style="left:217px;top:643px">2023-09-08</div>
<div class="a td dg" style="left:438px;top:643px">1720652450001</div>
<div class="a td up" style="left:558px;top:643px">BARRAGAN TOAPANTA JAVIER EDUARDO</div>
<div class="a td dg" style="right:248px;top:643px;text-align:right">886.8000</div>
<svg class="a" style="left:1118px;top:638px" width="22" height="26" viewBox="0 0 22 26"><path d="M0.5 0.5h12.5l5.5 5.5v18.5h-18z" fill="url(#vg)" stroke="#3d5f80" stroke-width="1"/><path d="M13 0.5v5.5h5.5" fill="#dbe9f7" stroke="#3d5f80" stroke-width="0.8"/><path d="M2.5 5.5h8M2.5 8.5h11M2.5 11.5h3M2.5 14.5h3M2.5 17.5h3M2.5 20.5h13" stroke="#2f4666" stroke-width="1"/><circle cx="10" cy="13" r="4.8" fill="#cfe4f7" stroke="#33506e" stroke-width="1.3"/><path d="M8 11a2.5 2.5 0 0 1 3-1" stroke="#fff" stroke-width="1" fill="none"/><path d="M13.6 16.6l5.5 5" stroke="#9a6a20" stroke-width="3.2" stroke-linecap="round"/><path d="M13.6 16.6l5.5 5" stroke="#f2c46a" stroke-width="1.6" stroke-linecap="round"/></svg>
<svg class="a" style="left:1183px;top:639px" width="22" height="22" viewBox="0 0 22 22"><path d="M0.5 0.5h13.5l3.5 3.5v16.5h-17z" fill="url(#eg)" stroke="#7a7a7a" stroke-width="1"/><path d="M13.5 0.5l4 4h-4z" fill="#c8c8c8"/><path d="M3 4.5h6M3 7.5h9M3 10.5h7M3 13.5h6M3 16.5h5" stroke="#6e6e6e" stroke-width="1"/><path d="M19.5 7l-9 9" stroke="#a45f00" stroke-width="3.6" stroke-linecap="round"/><path d="M19.5 7l-9 9" stroke="#f6a628" stroke-width="2.2" stroke-linecap="round"/><path d="M10.2 16.3l-1.2 1.2" stroke="#221100" stroke-width="2.2" stroke-linecap="round"/></svg>
<svg class="a" style="left:1244px;top:638px" width="24" height="25" viewBox="0 0 24 25"><ellipse cx="12" cy="22.5" rx="5.5" ry="1.3" fill="#c4c8d0" opacity=".75"/><path d="M4.3 4.3L19.7 19.7M19.7 4.3L4.3 19.7" stroke="#9c1a1c" stroke-width="6.4"/><path d="M4.3 4.3L19.7 19.7M19.7 4.3L4.3 19.7" stroke="#e3282b" stroke-width="4.6"/><path d="M5 4.6L12 11.6M19 4.6L12 11.6" stroke="#f27070" stroke-width="1.2" opacity=".7"/></svg>
<div class="a" style="left:37px;top:665px;width:28px;height:26px;background:#e3ebfb"></div>
<div class="a" style="left:67px;top:665px;width:147px;height:26px;background:#e3ebfb"></div>
<div class="a" style="left:216px;top:665px;width:219px;height:26px;background:#e3ebfb"></div>
<div class="a" style="left:437px;top:665px;width:118px;height:26px;background:#e3ebfb"></div>
<div class="a" style="left:557px;top:665px;width:429px;height:26px;background:#e3ebfb"></div>
<div class="a" style="left:988px;top:665px;width:124px;height:26px;background:#e3ebfb"></div>
<div class="a" style="left:1114px;top:665px;width:63px;height:26px;background:#e3ebfb"></div>
<div class="a" style="left:1179px;top:665px;width:63px;height:26px;background:#e3ebfb"></div>
<div class="a" style="left:1244px;top:665px;width:62px;height:26px;background:#e3ebfb"></div>
<div class="a td dg" style="left:38px;top:671px">10</div>
<div class="a td dg" style="left:68px;top:671px">001-001-000000027</div>
<div class="a td dg" style="left:217px;top:671px">2023-08-21</div>
<div class="a td dg" style="left:438px;top:671px">1304238536001</div>
<div class="a td up" style="left:558px;top:671px">FARIAS RIOS JOSE FRANKLIN</div>
<div class="a td dg" style="right:248px;top:671px;text-align:right">1,120.0000</div>
<svg class="a" style="left:1118px;top:666px" width="22" height="26" viewBox="0 0 22 26"><path d="M0.5 0.5h12.5l5.5 5.5v18.5h-18z" fill="url(#vg)" stroke="#3d5f80" stroke-width="1"/><path d="M13 0.5v5.5h5.5" fill="#dbe9f7" stroke="#3d5f80" stroke-width="0.8"/><path d="M2.5 5.5h8M2.5 8.5h11M2.5 11.5h3M2.5 14.5h3M2.5 17.5h3M2.5 20.5h13" stroke="#2f4666" stroke-width="1"/><circle cx="10" cy="13" r="4.8" fill="#cfe4f7" stroke="#33506e" stroke-width="1.3"/><path d="M8 11a2.5 2.5 0 0 1 3-1" stroke="#fff" stroke-width="1" fill="none"/><path d="M13.6 16.6l5.5 5" stroke="#9a6a20" stroke-width="3.2" stroke-linecap="round"/><path d="M13.6 16.6l5.5 5" stroke="#f2c46a" stroke-width="1.6" stroke-linecap="round"/></svg>
<svg class="a" style="left:1183px;top:667px" width="22" height="22" viewBox="0 0 22 22"><path d="M0.5 0.5h13.5l3.5 3.5v16.5h-17z" fill="url(#eg)" stroke="#7a7a7a" stroke-width="1"/><path d="M13.5 0.5l4 4h-4z" fill="#c8c8c8"/><path d="M3 4.5h6M3 7.5h9M3 10.5h7M3 13.5h6M3 16.5h5" stroke="#6e6e6e" stroke-width="1"/><path d="M19.5 7l-9 9" stroke="#a45f00" stroke-width="3.6" stroke-linecap="round"/><path d="M19.5 7l-9 9" stroke="#f6a628" stroke-width="2.2" stroke-linecap="round"/><path d="M10.2 16.3l-1.2 1.2" stroke="#221100" stroke-width="2.2" stroke-linecap="round"/></svg>
<svg class="a" style="left:1244px;top:666px" width="24" height="25" viewBox="0 0 24 25"><ellipse cx="12" cy="22.5" rx="5.5" ry="1.3" fill="#c4c8d0" opacity=".75"/><path d="M4.3 4.3L19.7 19.7M19.7 4.3L4.3 19.7" stroke="#9c1a1c" stroke-width="6.4"/><path d="M4.3 4.3L19.7 19.7M19.7 4.3L4.3 19.7" stroke="#e3282b" stroke-width="4.6"/><path d="M5 4.6L12 11.6M19 4.6L12 11.6" stroke="#f27070" stroke-width="1.2" opacity=".7"/></svg>
<div class="a td dg" style="left:38px;top:699px">11</div>
<div class="a td dg" style="left:68px;top:699px">018-102-000380141</div>
<div class="a td dg" style="left:217px;top:699px">2023-08-21</div>
<div class="a td dg" style="left:438px;top:699px">1790819515001</div>
<div class="a td up" style="left:558px;top:699px">DILIPA, DISTRIBUIDORA DE LIBROS Y PAPELERIA C.LTDA.</div>
<div class="a td dg" style="right:248px;top:699px;text-align:right">100.6000</div>
<svg class="a" style="left:1118px;top:694px" width="22" height="26" viewBox="0 0 22 26"><path d="M0.5 0.5h12.5l5.5 5.5v18.5h-18z" fill="url(#vg)" stroke="#3d5f80" stroke-width="1"/><path d="M13 0.5v5.5h5.5" fill="#dbe9f7" stroke="#3d5f80" stroke-width="0.8"/><path d="M2.5 5.5h8M2.5 8.5h11M2.5 11.5h3M2.5 14.5h3M2.5 17.5h3M2.5 20.5h13" stroke="#2f4666" stroke-width="1"/><circle cx="10" cy="13" r="4.8" fill="#cfe4f7" stroke="#33506e" stroke-width="1.3"/><path d="M8 11a2.5 2.5 0 0 1 3-1" stroke="#fff" stroke-width="1" fill="none"/><path d="M13.6 16.6l5.5 5" stroke="#9a6a20" stroke-width="3.2" stroke-linecap="round"/><path d="M13.6 16.6l5.5 5" stroke="#f2c46a" stroke-width="1.6" stroke-linecap="round"/></svg>
<svg class="a" style="left:1183px;top:695px" width="22" height="22" viewBox="0 0 22 22"><path d="M0.5 0.5h13.5l3.5 3.5v16.5h-17z" fill="url(#eg)" stroke="#7a7a7a" stroke-width="1"/><path d="M13.5 0.5l4 4h-4z" fill="#c8c8c8"/><path d="M3 4.5h6M3 7.5h9M3 10.5h7M3 13.5h6M3 16.5h5" stroke="#6e6e6e" stroke-width="1"/><path d="M19.5 7l-9 9" stroke="#a45f00" stroke-width="3.6" stroke-linecap="round"/><path d="M19.5 7l-9 9" stroke="#f6a628" stroke-width="2.2" stroke-linecap="round"/><path d="M10.2 16.3l-1.2 1.2" stroke="#221100" stroke-width="2.2" stroke-linecap="round"/></svg>
<svg class="a" style="left:1244px;top:694px" width="24" height="25" viewBox="0 0 24 25"><ellipse cx="12" cy="22.5" rx="5.5" ry="1.3" fill="#c4c8d0" opacity=".75"/><path d="M4.3 4.3L19.7 19.7M19.7 4.3L4.3 19.7" stroke="#9c1a1c" stroke-width="6.4"/><path d="M4.3 4.3L19.7 19.7M19.7 4.3L4.3 19.7" stroke="#e3282b" stroke-width="4.6"/><path d="M5 4.6L12 11.6M19 4.6L12 11.6" stroke="#f27070" stroke-width="1.2" opacity=".7"/></svg>
<div class="a" style="left:37px;top:721px;width:28px;height:26px;background:#e3ebfb"></div>
<div class="a" style="left:67px;top:721px;width:147px;height:26px;background:#e3ebfb"></div>
<div class="a" style="left:216px;top:721px;width:219px;height:26px;background:#e3ebfb"></div>
<div class="a" style="left:437px;top:721px;width:118px;height:26px;background:#e3ebfb"></div>
<div class="a" style="left:557px;top:721px;width:429px;height:26px;background:#e3ebfb"></div>
<div class="a" style="left:988px;top:721px;width:124px;height:26px;background:#e3ebfb"></div>
<div class="a" style="left:1114px;top:721px;width:63px;height:26px;background:#e3ebfb"></div>
<div class="a" style="left:1179px;top:721px;width:63px;height:26px;background:#e3ebfb"></div>
<div class="a" style="left:1244px;top:721px;width:62px;height:26px;background:#e3ebfb"></div>
<svg class="a" style="left:1118px;top:722px" width="22" height="26" viewBox="0 0 22 26"><path d="M0.5 0.5h12.5l5.5 5.5v18.5h-18z" fill="url(#vg)" stroke="#3d5f80" stroke-width="1"/><path d="M13 0.5v5.5h5.5" fill="#dbe9f7" stroke="#3d5f80" stroke-width="0.8"/><path d="M2.5 5.5h8M2.5 8.5h11M2.5 11.5h3M2.5 14.5h3M2.5 17.5h3M2.5 20.5h13" stroke="#2f4666" stroke-width="1"/><circle cx="10" cy="13" r="4.8" fill="#cfe4f7" stroke="#33506e" stroke-width="1.3"/><path d="M8 11a2.5 2.5 0 0 1 3-1" stroke="#fff" stroke-width="1" fill="none"/><path d="M13.6 16.6l5.5 5" stroke="#9a6a20" stroke-width="3.2" stroke-linecap="round"/><path d="M13.6 16.6l5.5 5" stroke="#f2c46a" stroke-width="1.6" stroke-linecap="round"/></svg>
<svg class="a" style="left:1183px;top:723px" width="22" height="22" viewBox="0 0 22 22"><path d="M0.5 0.5h13.5l3.5 3.5v16.5h-17z" fill="url(#eg)" stroke="#7a7a7a" stroke-width="1"/><path d="M13.5 0.5l4 4h-4z" fill="#c8c8c8"/><path d="M3 4.5h6M3 7.5h9M3 10.5h7M3 13.5h6M3 16.5h5" stroke="#6e6e6e" stroke-width="1"/><path d="M19.5 7l-9 9" stroke="#a45f00" stroke-width="3.6" stroke-linecap="round"/><path d="M19.5 7l-9 9" stroke="#f6a628" stroke-width="2.2" stroke-linecap="round"/><path d="M10.2 16.3l-1.2 1.2" stroke="#221100" stroke-width="2.2" stroke-linecap="round"/></svg>
<svg class="a" style="left:1244px;top:722px" width="24" height="25" viewBox="0 0 24 25"><ellipse cx="12" cy="22.5" rx="5.5" ry="1.3" fill="#c4c8d0" opacity=".75"/><path d="M4.3 4.3L19.7 19.7M19.7 4.3L4.3 19.7" stroke="#9c1a1c" stroke-width="6.4"/><path d="M4.3 4.3L19.7 19.7M19.7 4.3L4.3 19.7" stroke="#e3282b" stroke-width="4.6"/><path d="M5 4.6L12 11.6M19 4.6L12 11.6" stroke="#f27070" stroke-width="1.2" opacity=".7"/></svg></div><!-- scrollbar -->
<div class="a" style="left:1343px;top:0;width:17px;height:620px;background:#f1f1f1"></div>
<div class="a" style="left:1345px;top:18px;width:13px;height:396px;background:#a8a8a8"></div>
<svg class="a" style="left:1347px;top:7px" width="9" height="6" viewBox="0 0 9 6"><path d="M0.5 5.5L4.5 1L8.5 5.5z" fill="#a3a3a3"/></svg>
<svg class="a" style="left:1347px;top:606px" width="9" height="6" viewBox="0 0 9 6"><path d="M0.5 0.5L4.5 5L8.5 0.5z" fill="#505050"/></svg>
<!-- floating widget -->
<div class="a" style="left:1328px;top:358px;width:15px;height:29px;background:#8a8bc0"></div>
<div class="a" style="left:1302px;top:352px;width:40px;height:40px;border-radius:50%;background:rgba(128,130,196,0.88);border:1.5px solid rgba(170,170,180,0.9)"></div>
<svg class="a" style="left:1302px;top:352px" width="40" height="40" viewBox="0 0 40 40"><circle cx="17" cy="22" r="8.6" stroke="#fff" stroke-width="1.3" fill="none"/><path d="M12.5 18.5l4.5 4 5-4" stroke="#fff" stroke-width="1.3" fill="none"/><path d="M24 15c2-3 5-4 8-6-1 3-2 6-4 8 1 1 2 1 3 0-1 2-3 4-5 4 0 1 0 2-1 3-0-3-1-6-1-9z" fill="#fff" opacity=".9"/><path d="M21 13c1-1 3-1 5-1l-2 2z" fill="#fff" opacity=".9"/></svg>
</div>
<div id="task"><svg class="a" style="left:16px;top:12px" width="16" height="16" viewBox="0 0 16 16"><path d="M0 2.2l6.5-.9v6.2H0zM7.4 1.2L16 0v7.5H7.4zM0 8.4h6.5v6.3L0 13.8zM7.4 8.4H16V16l-8.6-1.2z" fill="#fff"/></svg>
<svg class="a" style="left:60px;top:9px" width="24" height="24" viewBox="0 0 24 24"><circle cx="14" cy="9.5" r="7.3" stroke="#fff" stroke-width="2" fill="none"/><path d="M8.8 14.8L1.5 22.5" stroke="#fff" stroke-width="2.2" stroke-linecap="round"/></svg>
<svg class="a" style="left:111px;top:8px" width="24" height="24" viewBox="0 0 24 24"><circle cx="12" cy="12" r="11.5" fill="#1ed760"/><path d="M5.5 8.6c4.5-1.4 9.2-1 13 1.1M6.2 12.2c3.8-1.1 7.6-.8 10.8 1M6.8 15.5c3-.8 6-.6 8.6.8" stroke="#0b0b0b" stroke-width="1.9" stroke-linecap="round" fill="none"/></svg>
<div class="a" style="left:103px;top:38px;width:40px;height:2px;background:#76b9ed"></div>
<svg class="a" style="left:160px;top:8px" width="24" height="24" viewBox="0 0 24 24"><defs><linearGradient id="edg" x1="0" y1="0" x2="0" y2="1"><stop offset="0" stop-color="#2aa8e8"/><stop offset="1" stop-color="#0f5ea8"/></linearGradient><linearGradient id="edg2" x1="0" y1="0" x2="1" y2=".6"><stop offset="0" stop-color="#2bb3e6"/><stop offset=".6" stop-color="#3ccf9a"/><stop offset="1" stop-color="#6ad35a"/></linearGradient></defs><circle cx="12" cy="12" r="11.5" fill="url(#edg)"/><path d="M1 10.5C2 4.5 6.5.5 12 .5c6.5 0 11.5 5 11.5 10.5 0 3-2 5.5-5.5 5.5-2.5 0-4-1-4.5-2.5 1.5-.3 2.5-1.5 2.5-3 0-2.5-2.5-4.5-5.5-4.5C6.5 6.5 3 8 1 10.5z" fill="url(#edg2)"/><ellipse cx="10" cy="12.5" rx="2.8" ry="2.6" fill="#0a2440"/><path d="M4 15c1.5 4 5 6.5 9 6.5 3.5 0 6.5-1.5 8-4-2 1-5 1-7.5 0" stroke="#0d4a90" stroke-width="1.6" fill="none" opacity=".8"/></svg>
<svg class="a" style="left:209px;top:8px" width="24" height="24" viewBox="0 0 24 24"><circle cx="12" cy="12" r="11.5" fill="#db4437"/><path d="M12 12L2 6.2A11.5 11.5 0 0 1 22.3 6.8z" fill="#db4437"/><path d="M12 12l10.3-5.2A11.5 11.5 0 0 1 12.5 23.5z" fill="#fcc934"/><path d="M12 12l.5 11.5A11.5 11.5 0 0 1 1.8 6.5z" fill="#1ea362"/><circle cx="12" cy="12" r="5.2" fill="#fff"/><circle cx="12" cy="12" r="4.1" fill="#4285f4"/></svg>
<svg class="a" style="left:258px;top:8px" width="24" height="24" viewBox="0 0 24 24"><defs><radialGradient id="ffg" cx=".6" cy=".3" r=".8"><stop offset="0" stop-color="#ffd43a"/><stop offset=".5" stop-color="#ff7a1a"/><stop offset="1" stop-color="#e3195a"/></radialGradient></defs><path d="M12 23c6 0 11-4.5 11-10.5 0-3-1.5-6-3.5-8 .3 2-.5 3.5-1.5 4.5C17 5 14.5 2.5 12.5 1c.5 3-1.5 5-3 6.5C7 6.5 5.5 5 5 3.5 2.5 6 1 9 1 12.5 1 18.5 6 23 12 23z" fill="url(#ffg)"/><circle cx="12.2" cy="13" r="5" fill="#7a2fd0"/><path d="M7.5 10c2-2 5-2 7-.5-2 0-3.5 1-4 2.5" fill="#ff8a1a"/></svg>
<svg class="a" style="left:307px;top:9px" width="24" height="22" viewBox="0 0 24 22"><path d="M0.5 2.5h8l2 2h13v16h-23z" fill="#f4c542"/><path d="M0.5 6.5h23v14h-23z" fill="#ffd866"/><path d="M5 21V13h14v8h-3v-5H8v5z" fill="#3d9ae0"/></svg>
<div class="a" style="left:299px;top:38px;width:34px;height:2px;background:#76b9ed"></div>
<div class="a" style="left:333px;top:38px;width:6px;height:2px;background:#4a6a8a"></div>
<svg class="a" style="left:356px;top:8px" width="24" height="24" viewBox="0 0 24 24"><path d="M6 1.5h16.5v21H6z" fill="#185abd"/><path d="M6 1.5h16.5v5.3H6z" fill="#41a5ee"/><path d="M6 6.8h16.5v5.2H6z" fill="#2b7cd3"/><path d="M6 17.2h16.5v5.3H6z" fill="#103f91"/><rect x="1" y="6" width="12" height="12" fill="#185abd"/><path d="M2.8 8.5l1.6 7h1.3l1.2-4.6 1.2 4.6h1.3l1.6-7H9.9l-.9 4.6-1.2-4.6H6.6l-1.2 4.6-.9-4.6z" fill="#fff"/></svg>
<svg class="a" style="left:405px;top:8px" width="24" height="24" viewBox="0 0 24 24"><path d="M6 1.5h16.5v21H6z" fill="#107c41"/><path d="M14 1.5h8.5v5.3H14z" fill="#33c481"/><path d="M14 6.8h8.5v5.2H14z" fill="#21a366"/><path d="M6 17.2h16.5v5.3H6z" fill="#185c37"/><rect x="1" y="6" width="12" height="12" fill="#107c41"/><path d="M3.5 8.5h2l1.5 2.5 1.5-2.5h2l-2.5 3.5 2.5 3.5h-2L7 13l-1.5 2.5h-2l2.5-3.5z" fill="#fff"/></svg>
<div class="a" style="left:397px;top:38px;width:40px;height:2px;background:#76b9ed"></div>
<div class="a" style="left:442px;top:0;width:48px;height:40px;background:#2a2a2a"></div>
<div class="a" style="left:442px;top:38px;width:48px;height:2px;background:#76b9ed"></div>
<svg class="a" style="left:454px;top:8px" width="26" height="26" viewBox="0 0 26 26"><circle cx="12" cy="12" r="11.5" fill="#db4437"/><path d="M12 12l10.3-5.2A11.5 11.5 0 0 1 12.5 23.5z" fill="#fcc934"/><path d="M12 12l.5 11.5A11.5 11.5 0 0 1 1.8 6.5z" fill="#1ea362"/><circle cx="12" cy="12" r="5.2" fill="#fff"/><circle cx="12" cy="12" r="4.1" fill="#4285f4"/><circle cx="19" cy="19" r="6.5" fill="#c5cbe0" stroke="#2a2a2a" stroke-width="0.8"/><path d="M16.5 14.5l1 2h2l1-2 .3 4-.5 4h-3.6l-.5-4z" fill="#d8c09a"/><rect x="14" y="22" width="10" height="3" fill="#3ab8a8"/></svg>
<!-- tray -->
<svg class="a" style="left:1116px;top:15px" width="15" height="9" viewBox="0 0 15 9"><path d="M1 8L7.5 1.5L14 8" stroke="#fff" stroke-width="1.3" fill="none"/></svg>
<svg class="a" style="left:1141px;top:10px" width="14" height="20" viewBox="0 0 14 20"><path d="M3 1.5h6M3 18.5h6" stroke="#ddd" stroke-width="1"/><rect x="1.5" y="5.5" width="8" height="8" rx="2" stroke="#fff" stroke-width="1.3" fill="none"/><path d="M9.5 8l3-1.5v6L9.5 11" stroke="#fff" stroke-width="1.2" fill="none"/></svg>
<svg class="a" style="left:1162px;top:11px" width="18" height="18" viewBox="0 0 18 18"><rect x="3.5" y="2.5" width="13" height="9" stroke="#fff" stroke-width="1.2" fill="none"/><path d="M10 11.5v3M6 15.5h8" stroke="#fff" stroke-width="1.2"/><rect x="0.5" y="3.5" width="5" height="6" fill="#101010" stroke="#fff" stroke-width="1.1"/><path d="M1 5.5h4" stroke="#fff" stroke-width="1"/></svg>
<svg class="a" style="left:1186px;top:11px" width="18" height="18" viewBox="0 0 18 18"><path d="M1.5 6.5h3l4-3.5v12l-4-3.5h-3z" stroke="#fff" stroke-width="1.2" fill="none" stroke-linejoin="round"/><path d="M11 6.5c1 1.5 1 3.5 0 5M13.5 4.5c2 2.5 2 6.5 0 9M15.8 3c2.5 3.5 2.5 8.5 0 12" stroke="#ccc" stroke-width="1" fill="none"/></svg>
<div class="a" style="left:1214.5px;top:13px;font-size:12.5px;color:#fff;line-height:14px;transform:scaleX(0.8);transform-origin:0 0">ESP</div>
<div class="a" style="left:1261px;top:4px;font-size:12.5px;color:#fff;line-height:14px;transform:scaleX(0.88);transform-origin:0 0">16:14</div>
<div class="a" style="left:1248px;top:21.5px;font-size:12.5px;color:#fff;line-height:14px;transform:scaleX(0.96);transform-origin:0 0">29/9/2023</div>
<svg class="a" style="left:1318px;top:12px" width="18" height="18" viewBox="0 0 18 18"><path d="M1 1.5h16v12H11l-2 2.5-2-2.5H1z" stroke="#fff" stroke-width="1.2" fill="none" stroke-linejoin="round"/></svg>
<div class="a" style="left:1355px;top:0;width:1px;height:40px;background:#555"></div>
</div>
</body></html>
